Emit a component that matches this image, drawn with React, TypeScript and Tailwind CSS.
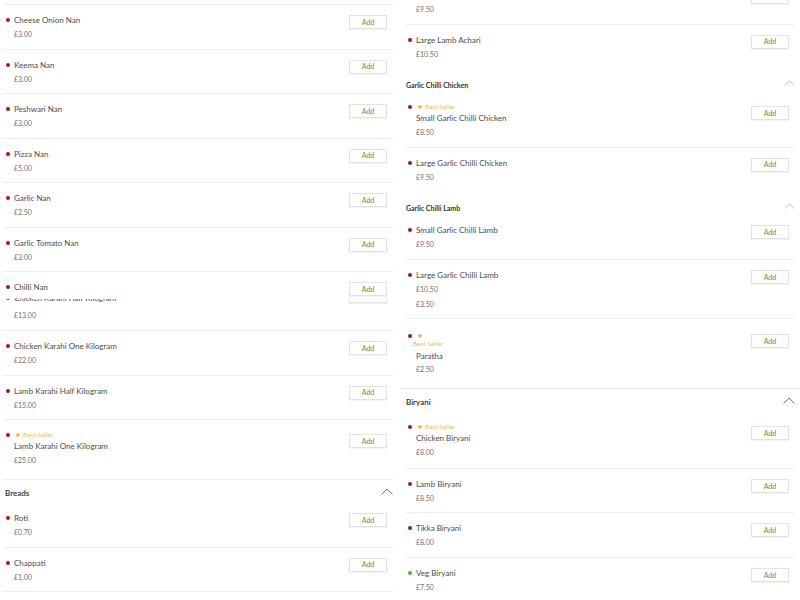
import React from "react";

type Item = {
  name: string;
  price: string;
  best?: boolean;
  veg?: boolean;
  extra?: string;
};

function Dot({ veg }: { veg?: boolean }) {
  return (
    <span
      className={
        veg
          ? "block h-[4px] w-[4px] shrink-0 rounded-full bg-[#5aa84e]"
          : "block h-[4px] w-[4px] shrink-0 rounded-full bg-[#9a1b22]"
      }
    />
  );
}

function Star() {
  return (
    <svg viewBox="0 0 24 24" className="h-[6px] w-[6px] shrink-0" fill="#e3b231">
      <path d="M12 2l2.9 6.3 6.9.7-5.2 4.6 1.5 6.8L12 16.9 5.9 20.4l1.5-6.8L2.2 9l6.9-.7z" />
    </svg>
  );
}

function AddButton({ className = "" }: { className?: string }) {
  return (
    <button
      className={
        "h-[14px] w-[38px] shrink-0 border border-[#e2e2e2] bg-white text-[7px] font-medium leading-none text-[#5a9f4e] shadow-[0_1px_1px_rgba(0,0,0,0.05)] " +
        className
      }
    >
      Add
    </button>
  );
}

function Chevron({ big }: { big?: boolean }) {
  return (
    <svg
      viewBox="0 0 12 7"
      className={big ? "h-[7px] w-[12px]" : "h-[6px] w-[11px]"}
      fill="none"
      stroke={big ? "#777" : "#9a9a9a"}
      strokeWidth={big ? 1 : 0.8}
    >
      <path d="M0.5 6.5L6 1l5.5 5.5" />
    </svg>
  );
}

function Name({ item }: { item: Item }) {
  return (
    <>
      {item.best ? (
        <div className="flex h-[10px] items-center">
          <Dot veg={item.veg} />
          <span className="ml-[5px]">
            <Star />
          </span>
          <span className="ml-[2px] text-[6.5px] text-[#e6c35a]">Best Seller</span>
        </div>
      ) : null}
      <div className={"flex h-[10px] items-center gap-[4px]" + (item.best ? " mt-[1px] pl-[8px]" : "")}>
        {item.best ? null : <Dot veg={item.veg} />}
        <span className="text-[8px] text-[#4d4d4d]">{item.name}</span>
      </div>
    </>
  );
}

function Price({ children, mt = "mt-[4px]" }: { children: React.ReactNode; mt?: string }) {
  return <div className={"h-[10px] pl-[8px] text-[7px] leading-[10px] text-[#707070] " + mt}>{children}</div>;
}

function Row({
  item,
  h = "h-[44.5px]",
  border = true,
}: {
  item: Item;
  h?: string;
  border?: boolean;
}) {
  return (
    <div
      className={
        "flex items-start justify-between pr-[6px] " +
        h +
        (border ? " border-b border-[#efefef]" : "")
      }
    >
      <div className="pl-[3px] pt-[10px]">
        <Name item={item} />
        <Price>{item.price}</Price>
        {item.extra ? <Price mt="mt-[5px]">{item.extra}</Price> : null}
      </div>
      <AddButton className={item.best ? "mt-[14px]" : "mt-[10px]"} />
    </div>
  );
}

function Header({ title, big, h = "h-[23px]", pt = "pt-[10px]" }: { title: string; big?: boolean; h?: string; pt?: string }) {
  return (
    <div className={"flex items-start justify-between pl-[1px] " + h + " " + pt}>
      <span
        className={
          big
            ? "text-[8px] font-semibold leading-[10px] text-[#2f2f2f]"
            : "text-[7px] font-bold leading-[10px] text-[#333]"
        }
      >
        {title}
      </span>
      <Chevron big={big} />
    </div>
  );
}

const nans: Item[] = [
  { name: "Cheese Onion Nan", price: "£3.00" },
  { name: "Keema Nan", price: "£3.00" },
  { name: "Peshwari Nan", price: "£3.00" },
  { name: "Pizza Nan", price: "£5.00" },
  { name: "Garlic Nan", price: "£2.50" },
  { name: "Garlic Tomato Nan", price: "£3.00" },
];

export default function App() {
  return (
    <div
      className="flex h-[600px] w-[800px] overflow-hidden bg-white"
      style={{ fontFamily: "Lato, 'Open Sans', sans-serif" }}
    >
      {/* left column */}
      <div className="w-[400px] shrink-0 pl-[3px] pr-[7px]">
        <div className="h-[5px] border-b border-[#efefef]" />
        {nans.map((n) => (
          <Row key={n.name} item={n} />
        ))}
        <div className="h-[27px] overflow-hidden">
          <Row item={{ name: "Chilli Nan", price: "£4.00" }} border={false} />
        </div>
        {/* half-hidden row */}
        <div className="h-[32px] overflow-hidden border-b border-[#efefef]">
          <div className="mt-[-16px] flex items-start justify-between pr-[6px]">
            <div className="pl-[3px] pt-[10px]">
              <div className="flex h-[10px] items-center gap-[4px]">
                <Dot />
                <span className="text-[8px] text-[#4d4d4d]">Chicken Karahi Half Kilogram</span>
              </div>
              <Price mt="mt-[7px]">£13.00</Price>
            </div>
            <AddButton className="mt-[6px]" />
          </div>
        </div>
        <Row item={{ name: "Chicken Karahi One Kilogram", price: "£22.00" }} />
        <Row item={{ name: "Lamb Karahi Half Kilogram", price: "£15.00" }} />
        <Row item={{ name: "Lamb Karahi One Kilogram", price: "£25.00", best: true }} h="h-[60px]" />
        <div className="flex h-[23px] items-start justify-between pl-[2px] pt-[8px]">
          <span className="text-[8px] font-semibold leading-[10px] text-[#2f2f2f]">Breads</span>
          <Chevron big />
        </div>
        <Row item={{ name: "Roti", price: "£0.70" }} />
        <Row item={{ name: "Chappati", price: "£1.00" }} />
      </div>

      {/* right column */}
      <div className="w-[400px] shrink-0 pl-[5px] pr-[5px]">
        <div className="mt-[-20px]">
          <Row item={{ name: "Small Lamb Achari", price: "£9.50" }} />
        </div>
        <Row item={{ name: "Large Lamb Achari", price: "£10.50" }} border={false} />
        <Header title="Garlic Chilli Chicken" h="h-[23px]" pt="pt-[11px]" />
        <Row item={{ name: "Small Garlic Chilli Chicken", price: "£8.50", best: true }} h="h-[55.5px]" />
        <Row item={{ name: "Large Garlic Chilli Chicken", price: "£9.50" }} border={false} />
        <Header title="Garlic Chilli Lamb" pt="pt-[11px]" />
        <Row item={{ name: "Small Garlic Chilli Lamb", price: "£9.50" }} h="h-[45px]" />
        <Row item={{ name: "Large Garlic Chilli Lamb", price: "£10.50", extra: "£3.50" }} h="h-[59px]" />
        {/* paratha */}
        <div className="flex h-[69px] items-start justify-between pr-[6px]">
          <div className="pl-[3px] pt-[12px]">
            <div className="flex h-[10px] items-center">
              <Dot />
              <span className="ml-[5px]">
                <Star />
              </span>
            </div>
            <div className="mt-[-2px] h-[10px] pl-[5px] text-[6.5px] leading-[10px] text-[#e6c35a]">Best Seller</div>
            <div className="mt-[2px] h-[10px] pl-[8px] text-[8px] leading-[10px] text-[#4d4d4d]">Paratha</div>
            <Price mt="mt-[3px]">£2.50</Price>
          </div>
          <AddButton className="mt-[15px]" />
        </div>
        <div className="-mx-[5px] h-px bg-[#ececec]" />
        <Header title="Biryani" big pt="pt-[8px]" />
        <Row item={{ name: "Chicken Biryani", price: "£8.00", best: true }} h="h-[57px]" />
        <Row item={{ name: "Lamb Biryani", price: "£8.50" }} h="h-[44px]" />
        <Row item={{ name: "Tikka Biryani", price: "£8.00" }} h="h-[45px]" />
        <Row item={{ name: "Veg Biryani", price: "£7.50", veg: true }} />
      </div>
    </div>
  );
}
